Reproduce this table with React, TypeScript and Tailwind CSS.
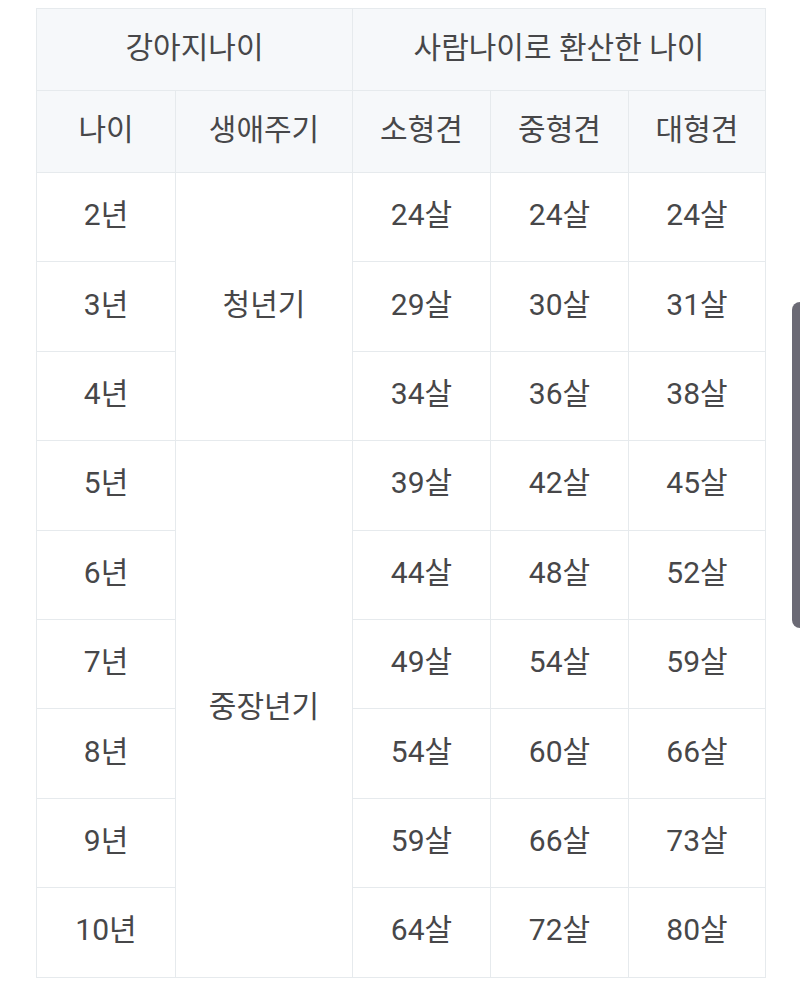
const rows = [
  { age: "2년", s: "24살", m: "24살", l: "24살" },
  { age: "3년", s: "29살", m: "30살", l: "31살" },
  { age: "4년", s: "34살", m: "36살", l: "38살" },
  { age: "5년", s: "39살", m: "42살", l: "45살" },
  { age: "6년", s: "44살", m: "48살", l: "52살" },
  { age: "7년", s: "49살", m: "54살", l: "59살" },
  { age: "8년", s: "54살", m: "60살", l: "66살" },
  { age: "9년", s: "59살", m: "66살", l: "73살" },
  { age: "10년", s: "64살", m: "72살", l: "80살" },
];

const cell = "border border-[#e6eaed] text-center align-middle font-normal pb-[4px]";

export default function App() {
  return (
    <div
      className="relative w-[800px] h-[995px] bg-white overflow-hidden text-[#474749]"
      style={{ fontFamily: 'Roboto, "Noto Sans CJK KR", "Noto Sans", sans-serif' }}
    >
      <div className="pt-[8px] pl-[36px]">
        <table className="border-collapse table-fixed w-[729px] text-[30px] leading-none">
          <colgroup>
            <col className="w-[139px]" />
            <col className="w-[177px]" />
            <col className="w-[138px]" />
            <col className="w-[138px]" />
            <col className="w-[137px]" />
          </colgroup>
          <thead className="bg-[#f6f8fa]">
            <tr className="h-[82px]">
              <th colSpan={2} className={cell}>
                강아지나이
              </th>
              <th colSpan={3} className={cell}>
                사람나이로 환산한 나이
              </th>
            </tr>
            <tr className="h-[82px]">
              <th className={cell}>나이</th>
              <th className={cell}>생애주기</th>
              <th className={cell}>소형견</th>
              <th className={cell}>중형견</th>
              <th className={cell}>대형견</th>
            </tr>
          </thead>
          <tbody>
            {rows.map((r, i) => (
              <tr key={r.age} className="h-[89.4px]">
                <td className={cell}>{r.age}</td>
                {i === 0 && (
                  <td rowSpan={3} className={cell}>
                    청년기
                  </td>
                )}
                {i === 3 && (
                  <td rowSpan={6} className={cell}>
                    중장년기
                  </td>
                )}
                <td className={cell}>{r.s}</td>
                <td className={cell}>{r.m}</td>
                <td className={cell}>{r.l}</td>
              </tr>
            ))}
          </tbody>
        </table>
      </div>

      {/* scroll indicator */}
      <div className="absolute left-[792px] top-[302px] w-[12px] h-[326px] rounded-l-[8px] bg-[#6b6a75]" />
    </div>
  );
}
